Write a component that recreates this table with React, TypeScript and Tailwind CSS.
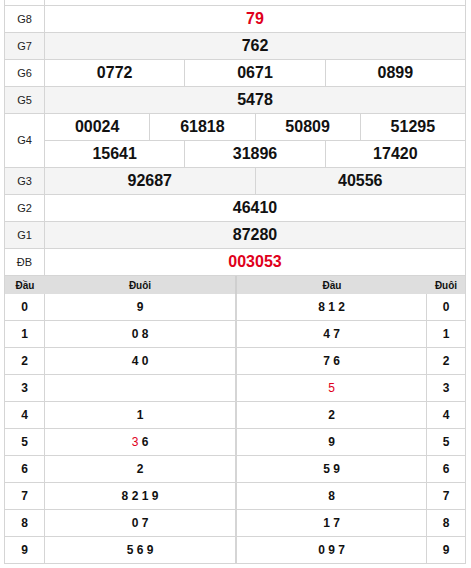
import React from "react";

const line = "border-[#d5d5d5]";

type Row = { label: string; values: string[][]; red?: boolean };

const rows: Row[] = [
  { label: "G8", values: [["79"]], red: true },
  { label: "G7", values: [["762"]] },
  { label: "G6", values: [["0772", "0671", "0899"]] },
  { label: "G5", values: [["5478"]] },
  { label: "G4", values: [["00024", "61818", "50809", "51295"], ["15641", "31896", "17420"]] },
  { label: "G3", values: [["92687", "40556"]] },
  { label: "G2", values: [["46410"]] },
  { label: "G1", values: [["87280"]] },
  { label: "ĐB", values: [["003053"]], red: true },
];

const spanFor = (n: number) =>
  n === 1 ? "col-span-12" : n === 2 ? "col-span-6" : n === 3 ? "col-span-4" : "col-span-3";

const dauLeft = ["9", "0 8", "4 0", "", "1", "*3 6", "2", "8 2 1 9", "0 7", "5 6 9"];
const dauRight = ["8 1 2", "4 7", "7 6", "*5", "2", "9", "5 9", "8", "1 7", "0 9 7"];

// "*" marks the red digit (the special prize tail)
const Digits = ({ text }: { text: string }) => {
  const parts = text.split(" ").filter(Boolean);
  return (
    <span>
      {parts.map((p, i) => (
        <React.Fragment key={i}>
          {i > 0 && " "}
          {p.startsWith("*") ? (
            <span className="font-normal text-[#e0001b]">{p.slice(1)}</span>
          ) : (
            p
          )}
        </React.Fragment>
      ))}
    </span>
  );
};

const App = () => {
  return (
    <div className="min-h-screen bg-white font-['Liberation_Sans',Arial,sans-serif] text-[#111]">
      <div className="ml-[4px] w-[462px]">
        <div className={`grid grid-cols-[40px_repeat(12,minmax(0,1fr))] border-l ${line}`}>
          <div className={`h-[6px] border-r border-b ${line}`} />
          <div className={`col-span-12 h-[6px] border-r border-b ${line}`} />

          {rows.map((row, ri) => {
            const bg = ri % 2 === 1 ? "bg-[#f4f4f4]" : "bg-white";
            return (
              <React.Fragment key={row.label}>
                <div
                  className={`${row.values.length > 1 ? "row-span-2" : "h-[27px]"} flex items-center justify-center border-r border-b ${line} ${bg} text-[11px] text-[#222]`}
                >
                  {row.label}
                </div>
                {row.values.map((group) =>
                  group.map((v, vi) => (
                    <div
                      key={v + vi}
                      className={`${spanFor(group.length)} flex h-[27px] items-center justify-center border-r border-b ${line} ${bg} text-[16px] font-bold ${row.red ? "text-[#e0001b]" : ""}`}
                    >
                      {v}
                    </div>
                  ))
                )}
              </React.Fragment>
            );
          })}
        </div>

        <div className={`grid grid-cols-[40px_192px_190px_39px] border-l ${line} text-[12px] font-bold`}>
          <div className="flex h-[18px] items-center justify-center bg-[#dedede] text-[10px]">Đầu</div>
          <div className="flex h-[18px] items-center justify-center border-r-2 border-[#cfcfcf] bg-[#dedede] text-[10px]">
            Đuôi
          </div>
          <div className="flex h-[18px] items-center justify-center bg-[#dedede] text-[10px]">Đầu</div>
          <div className={`flex h-[18px] items-center justify-center border-r ${line} bg-[#dedede] text-[10px]`}>
            Đuôi
          </div>

          {dauLeft.map((left, i) => (
            <React.Fragment key={i}>
              <div className={`flex h-[27px] items-center justify-center border-r border-b ${line}`}>{i}</div>
              <div className={`flex h-[27px] items-center justify-center border-r-2 border-b ${line}`}>
                <Digits text={left} />
              </div>
              <div className={`flex h-[27px] items-center justify-center border-r border-b ${line}`}>
                <Digits text={dauRight[i]} />
              </div>
              <div className={`flex h-[27px] items-center justify-center border-r border-b ${line}`}>{i}</div>
            </React.Fragment>
          ))}
        </div>
      </div>
    </div>
  );
};

export default App;
